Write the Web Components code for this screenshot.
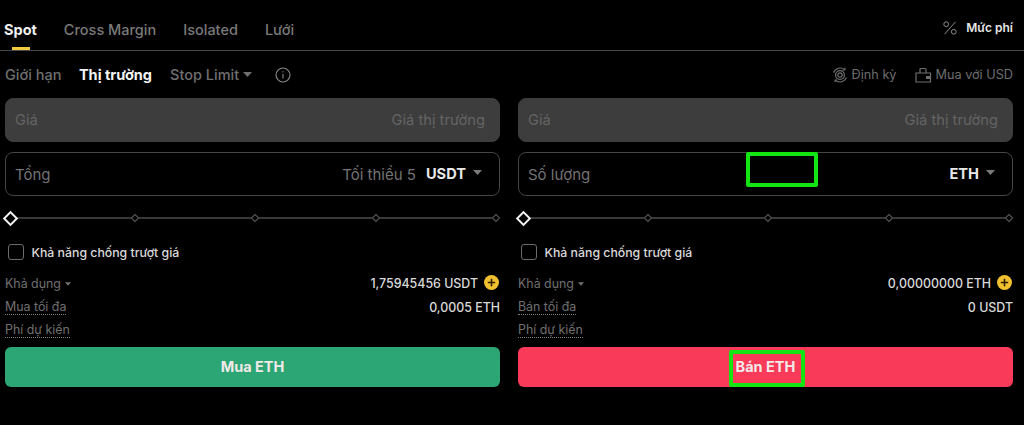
<!DOCTYPE html>
<html lang="vi">
<head>
<meta charset="utf-8">
<title>Spot</title>
<style>
  html, body { margin: 0; background: #000; }
  body { font-family: Inter, "Noto Sans", sans-serif; color: #eaecef; }
</style>
</head>
<body>
<trade-page></trade-page>

<script>
(function () {
  'use strict';

  const CARET = '<svg width="9" height="5" viewBox="0 0 9 5"><path d="M0 0h9L4.5 5z" fill="currentColor"/></svg>';

  class TradeTabs extends HTMLElement {
    constructor() {
      super();
      this.attachShadow({ mode: 'open' });
    }

    connectedCallback() {
      this.shadowRoot.innerHTML = `
        <style>
          :host {
            display: flex;
            align-items: center;
            height: 51px;
            padding: 9px 11px 0 4px;
            box-sizing: border-box;
            border-bottom: 1px solid #4a4a4a;
            font-size: 14.5px;
            font-weight: 500;
            color: #7a7a7a;
          }
          .tab { position: relative; margin-right: 27px; }
          .tab.on { color: #f2f2f2; font-weight: 700; }
          .tab.on::after {
            content: '';
            position: absolute;
            left: 8px;
            bottom: -12px;
            width: 18px;
            height: 3px;
            background: #f0c93f;
          }
          .fee {
            margin: -4px 0 0 auto;
            display: flex;
            align-items: center;
            gap: 9px;
            font-size: 12px;
            font-weight: 600;
            color: #e6e6e6;
          }
          svg { display: block; color: #8a8a8a; }
        </style>
        <span class="tab on">Spot</span>
        <span class="tab">Cross Margin</span>
        <span class="tab">Isolated</span>
        <span class="tab">Lưới</span>
        <span class="fee">
          <svg width="14" height="14" viewBox="0 0 14 14" fill="none" stroke="currentColor" stroke-width="1">
            <circle cx="3.2" cy="3.2" r="2.4"/><circle cx="10.8" cy="10.8" r="2.4"/><path d="M12.5 .8L1.5 13.2"/>
          </svg>
          Mức phí
        </span>
      `;
    }
  }

  class OrderTypes extends HTMLElement {
    constructor() {
      super();
      this.attachShadow({ mode: 'open' });
    }

    connectedCallback() {
      this.shadowRoot.innerHTML = `
        <style>
          :host {
            display: flex;
            align-items: center;
            height: 47px;
            padding: 0 11px 0 5px;
            font-size: 14.5px;
            font-weight: 500;
            color: #6f6f6f;
          }
          .on { color: #f2f2f2; font-weight: 700; margin: 0 18px 0 17.5px; }
          .stop { display: flex; align-items: center; gap: 4px; }
          .info { margin-left: 23px; display: block; color: #8a8a8a; }
          .links {
            margin-left: auto;
            display: flex;
            align-items: center;
            gap: 18px;
            font-size: 12.7px;
            font-weight: 400;
            color: #6e6e6e;
          }
          .links span { display: flex; align-items: center; gap: 4px; }
          svg { display: block; }
        </style>
        <span>Giới hạn</span>
        <span class="on">Thị trường</span>
        <span class="stop">Stop Limit ${CARET}</span>
        <svg class="info" width="16" height="16" viewBox="0 0 16 16" fill="none" stroke="currentColor" stroke-width="1.1">
          <circle cx="8" cy="8" r="7"/><path d="M8 7v4.5M8 4.2v1.4"/>
        </svg>
        <div class="links">
          <span>
            <svg width="16" height="16" viewBox="0 0 16 16" fill="none" stroke="currentColor" stroke-width="1.2">
              <circle cx="8" cy="8" r="2.2"/><circle cx="8" cy="8" r="4.4"/>
              <path d="M1.6 5.6A7 7 0 0 1 12.6 2.6M14.4 10.4A7 7 0 0 1 3.4 13.4"/>
              <path d="M12.9 .8v2.2h-2.2M3.1 15.2V13h2.2"/>
            </svg>
            Định kỳ
          </span>
          <span>
            <svg width="17" height="16" viewBox="0 0 17 16" fill="none" stroke="currentColor" stroke-width="1.2">
              <path d="M1 6h14.5v9H1z"/><path d="M5 6V2.5A1 1 0 0 1 6 1.5h4a1 1 0 0 1 1 1V6"/>
              <path d="M11 9h5v3h-5z" fill="currentColor" stroke="none"/>
            </svg>
            Mua với USD
          </span>
        </div>
      `;
    }
  }

  // input box: filled = disabled market price, otherwise outlined
  class TradeField extends HTMLElement {
    constructor() {
      super();
      this.attachShadow({ mode: 'open' });
    }

    connectedCallback() {
      const unit = this.getAttribute('unit');
      this.shadowRoot.innerHTML = `
        <style>
          :host {
            display: flex;
            align-items: center;
            height: 44px;
            padding: 0 17px 0 9px;
            box-sizing: border-box;
            border: 1px solid #454545;
            border-radius: 8px;
            font-size: 15px;
            font-weight: 400;
            color: #737373;
          }
          :host([filled]) {
            background: #3d3d3d;
            border-color: #3d3d3d;
            padding-right: 14px;
            font-size: 14.7px;
            color: #646464;
          }
          .right { margin-left: auto; display: flex; align-items: center; }
          .unit {
            margin-left: 10px;
            display: flex;
            align-items: center;
            gap: 7px;
            font-size: 14.6px;
            font-weight: 700;
            color: #e8e8e8;
          }
          .unit svg { color: #7a7a7a; margin-top: -3px; }
        </style>
        <span>${this.getAttribute('label')}</span>
        <span class="right">
          <span>${this.getAttribute('hint') || ''}</span>
          ${unit ? `<span class="unit">${unit} ${CARET}</span>` : ''}
        </span>
      `;
    }
  }

  class PctSlider extends HTMLElement {
    constructor() {
      super();
      this.attachShadow({ mode: 'open' });
    }

    connectedCallback() {
      this.shadowRoot.innerHTML = `
        <style>
          :host {
            display: block;
            position: relative;
            height: 14px;
          }
          .line {
            position: absolute;
            left: 5px;
            right: 4px;
            top: 6px;
            height: 2px;
            background: #383838;
          }
          .dots {
            position: relative;
            display: flex;
            justify-content: space-between;
            align-items: center;
            height: 14px;
          }
          i {
            display: block;
            width: 6px;
            height: 6px;
            margin: 0 1px;
            box-sizing: border-box;
            border: 1px solid #5e5e5e;
            background: #000;
            transform: rotate(45deg);
          }
          i.start {
            width: 11px;
            height: 11px;
            margin: 0 2px 0 0;
            border: 2px solid #f2f2f2;
          }
        </style>
        <div class="line"></div>
        <div class="dots"><i class="start"></i><i></i><i></i><i></i><i></i></div>
      `;
    }
  }

  class InfoRow extends HTMLElement {
    constructor() {
      super();
      this.attachShadow({ mode: 'open' });
    }

    connectedCallback() {
      const hasHelp = this.hasAttribute('dotted');
      this.shadowRoot.innerHTML = `
        <style>
          :host {
            display: flex;
            justify-content: space-between;
            align-items: center;
            height: 23.5px;
            font-size: 12.4px;
            color: #707070;
          }
          .label { display: flex; align-items: center; gap: 4px; }
          .dotted { border-bottom: 1px dotted #7c7c7c; line-height: 14px; }
          .val {
            display: flex;
            align-items: center;
            gap: 6px;
            font-weight: 500;
            color: #d9d9d9;
          }
          .val svg { display: block; margin: -3px 1px 0 0; }
        </style>
        <span class="label">
          <span class="${hasHelp ? 'dotted' : ''}">${this.getAttribute('label')}</span>
          ${this.hasAttribute('caret') ? CARET.replace('width="9" height="5"', 'width="6" height="4"') : ''}
        </span>
        <span class="val">
          ${this.getAttribute('value') || ''}
          ${this.hasAttribute('topup') ? `<svg width="15" height="15" viewBox="0 0 15 15">
            <circle cx="7.5" cy="7.5" r="7.5" fill="#f0c02e"/>
            <path d="M7.5 3.8v7.4M3.8 7.5h7.4" stroke="#2a2000" stroke-width="1.6"/>
          </svg>` : ''}
        </span>
      `;
    }
  }

  class TradePanel extends HTMLElement {
    constructor() {
      super();
      this.attachShadow({ mode: 'open' });
    }

    connectedCallback() {
      const side = this.getAttribute('side');
      this.shadowRoot.innerHTML = `
        <style>
          :host { display: block; position: relative; }
          trade-field + trade-field { margin-top: 10px; }
          pct-slider { margin-top: 15px; }
          .check {
            display: flex;
            align-items: center;
            gap: 8px;
            margin: 19px 0 12px 2.5px;
            font-size: 12.3px;
            font-weight: 500;
            color: #d9d9d9;
          }
          .box {
            width: 16px;
            height: 16px;
            box-sizing: border-box;
            border: 1px solid #6a6a6a;
            border-radius: 3px;
          }
          .btn {
            display: flex;
            align-items: center;
            justify-content: center;
            height: 40px;
            margin-top: 4px;
            border-radius: 6px;
            font-size: 14.5px;
            font-weight: 700;
            color: #f2e9e9;
            background: ${side === 'sell' ? '#f93b59' : '#2ba674'};
          }
          .btn span { position: relative; }
          .mark {
            position: absolute;
            box-sizing: border-box;
            border: 4px solid #13e513;
            border-radius: 2px;
          }
          .mark.qty { left: 228px; top: 54px; width: 72px; height: 35px; }
          .mark.sell { left: -7px; top: -8px; width: 76px; height: 37px; }
        </style>
        <trade-field filled label="Giá" hint="Giá thị trường"></trade-field>
        ${side === 'sell'
          ? '<trade-field label="Số lượng" unit="ETH"></trade-field>'
          : '<trade-field label="Tổng" hint="Tối thiểu 5" unit="USDT"></trade-field>'}
        <pct-slider></pct-slider>
        <div class="check"><span class="box"></span>Khả năng chống trượt giá</div>
        <info-row caret topup label="Khả dụng" value="${side === 'sell' ? '0,00000000 ETH' : '1,75945456 USDT'}"></info-row>
        <info-row dotted label="${side === 'sell' ? 'Bán tối đa' : 'Mua tối đa'}" value="${side === 'sell' ? '0 USDT' : '0,0005 ETH'}"></info-row>
        <info-row dotted label="Phí dự kiến"></info-row>
        <div class="btn"><span>${side === 'sell' ? 'Bán ETH<b class="mark sell"></b>' : 'Mua ETH'}</span></div>
        ${side === 'sell' ? '<div class="mark qty"></div>' : ''}
      `;
    }
  }

  class TradePage extends HTMLElement {
    constructor() {
      super();
      this.attachShadow({ mode: 'open' });
    }

    connectedCallback() {
      this.shadowRoot.innerHTML = `
        <style>
          :host { display: block; height: 425px; overflow: hidden; background: #000; }
          .cols {
            display: grid;
            grid-template-columns: 1fr 1fr;
            gap: 18px;
            padding: 0 11px 0 5px;
          }
        </style>
        <trade-tabs></trade-tabs>
        <order-types></order-types>
        <div class="cols">
          <trade-panel side="buy"></trade-panel>
          <trade-panel side="sell"></trade-panel>
        </div>
      `;
    }
  }

  customElements.define('trade-tabs', TradeTabs);
  customElements.define('order-types', OrderTypes);
  customElements.define('trade-field', TradeField);
  customElements.define('pct-slider', PctSlider);
  customElements.define('info-row', InfoRow);
  customElements.define('trade-panel', TradePanel);
  customElements.define('trade-page', TradePage);
})();
</script>
</body>
</html>
